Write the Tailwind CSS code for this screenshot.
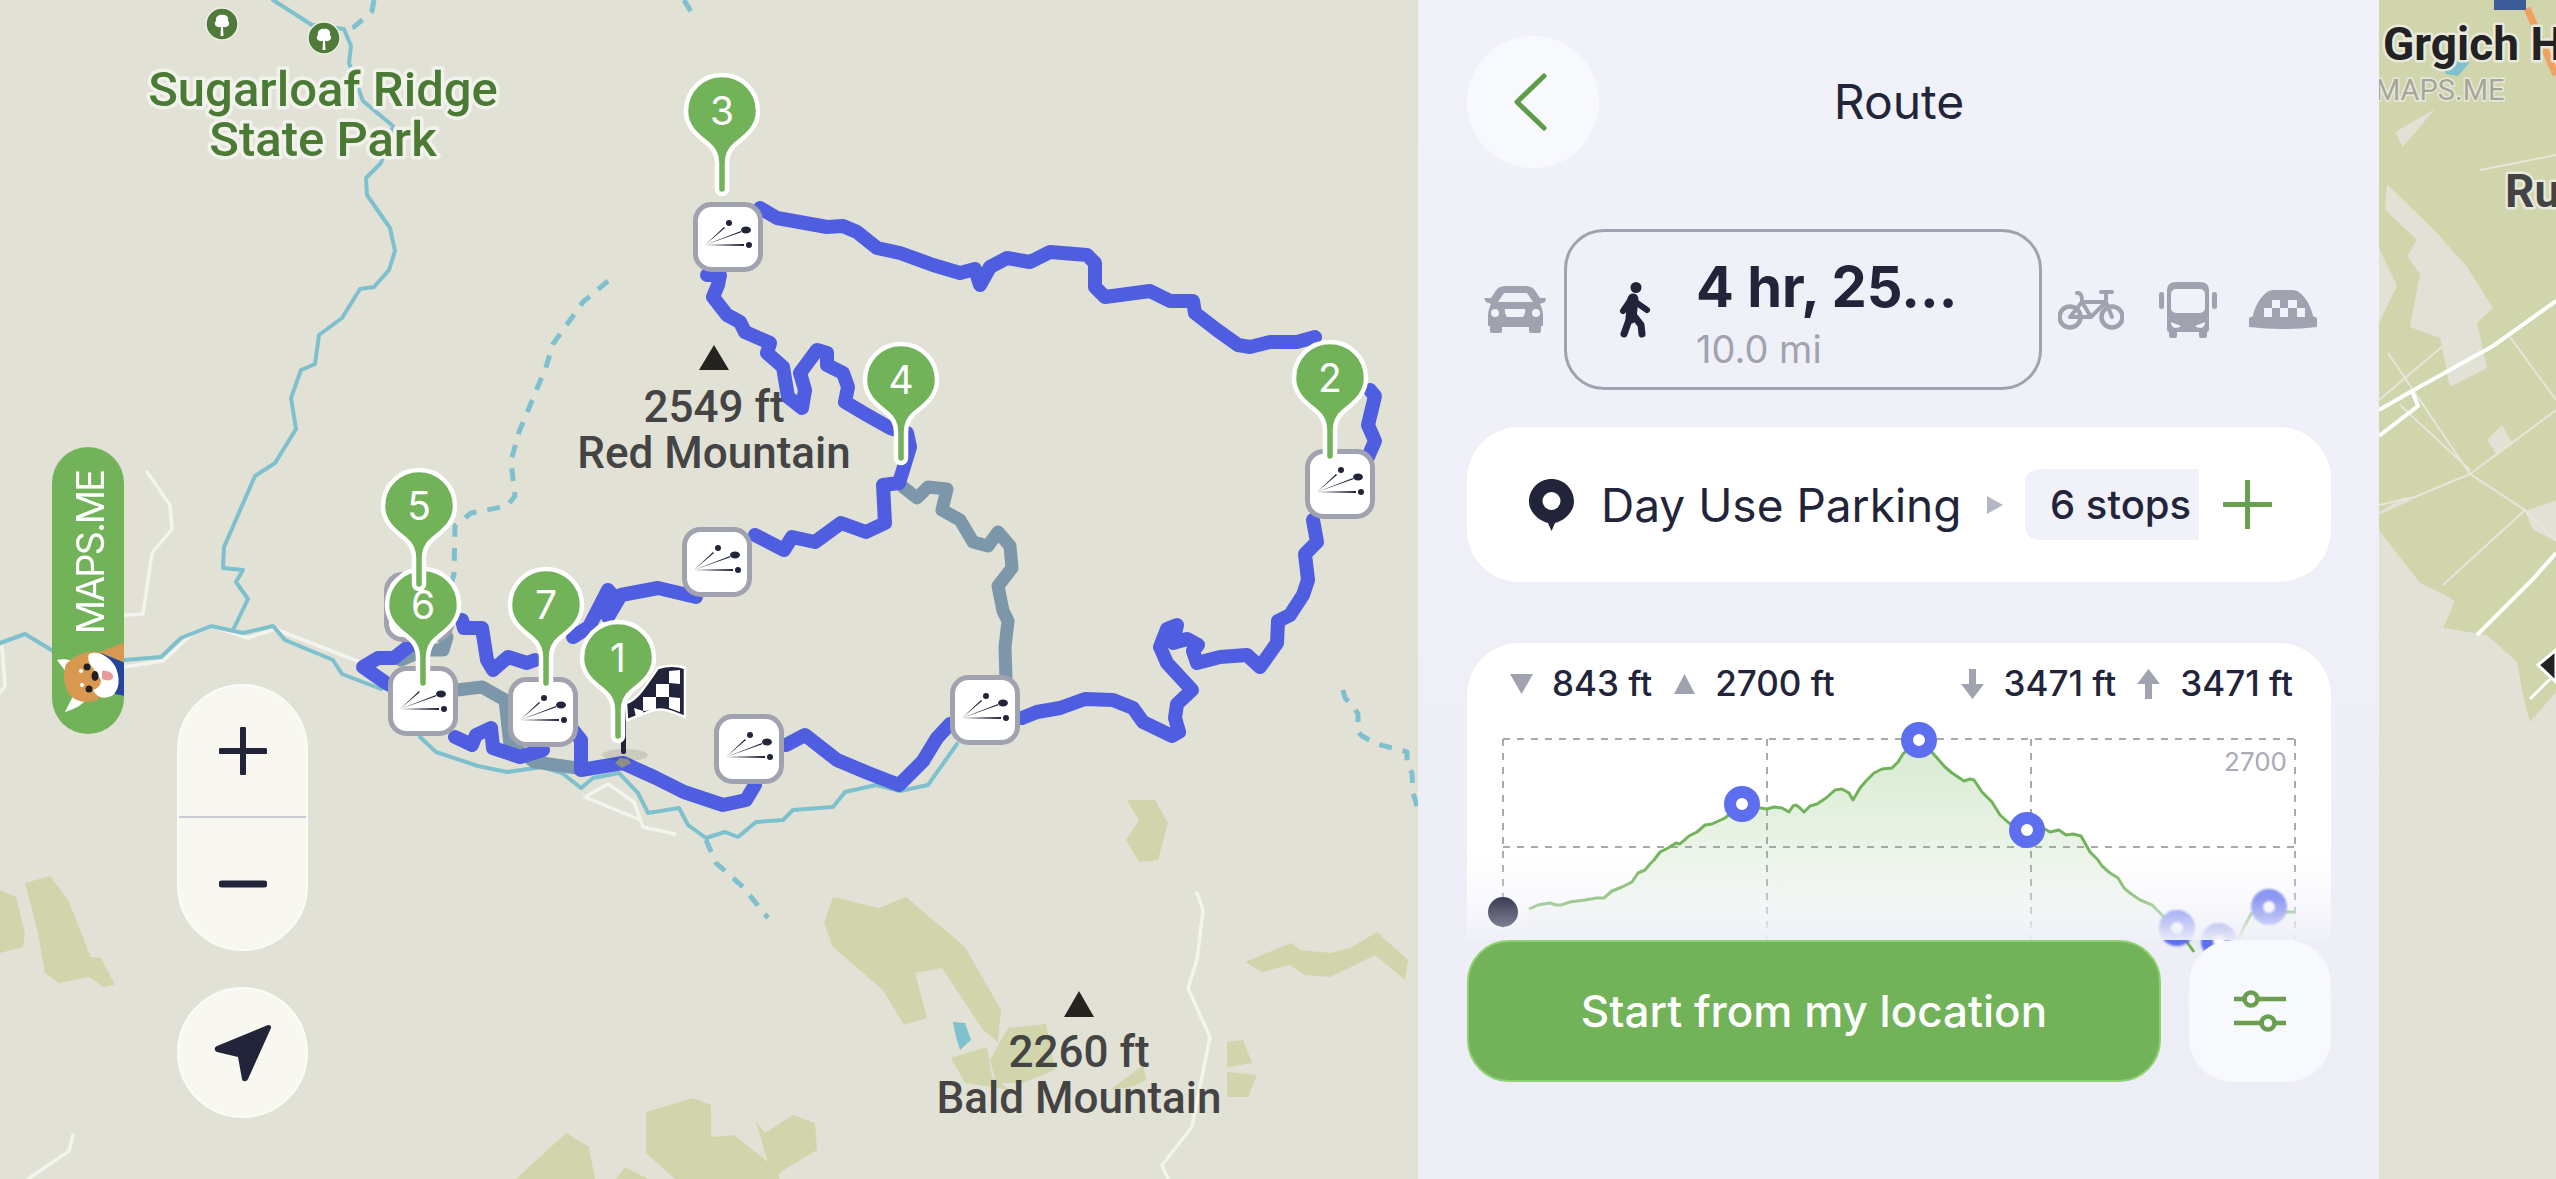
<!DOCTYPE html>
<html lang="en">

<head>
  <meta charset="utf-8" />
  <meta content="width=device-width, initial-scale=1.0" name="viewport" />
  <title>Route</title>
  <script src="https://cdn.jsdelivr.net/npm/@tailwindcss/browser@4"></script>
</head>

<body class="w-[2556px] h-[1179px] overflow-hidden flex font-['Inter',sans-serif] text-[#22243a]">

  <!-- Map, left part -->
  <div class="relative w-[1418px] h-full shrink-0 bg-[#e2e1d5] overflow-hidden">
    <svg class="absolute inset-0" width="1418" height="1179" viewBox="0 0 1418 1179" fill="none">
      <defs>
        <g id="pin">
          <path d="M0,-36 C20,-36 36,-20 36,0 C36,16 25,24 14,33 C8,38 5,44 5,52 L5,78 A5,5 0 0 1 -5,78 L-5,52 C-5,44 -8,38 -14,33 C-25,24 -36,16 -36,0 C-36,-20 -20,-36 0,-36Z" fill="#72b35a" stroke="#fff" stroke-width="4.5" />
        </g>
        <g id="stop">
          <rect x="-32.5" y="-32.5" width="65" height="65" rx="16" fill="#fff" stroke="#a0a2b0" stroke-width="5" />
          <path d="M-23,8 L-4,-10 L-3,-9Z M-23,8 L13,-6 L13.3,-4.8Z M-23,8 L16,7 L16,9Z" fill="#22243a" />
          <circle cx="1" cy="-14" r="3" fill="#22243a" />
          <ellipse cx="18" cy="-7" rx="5" ry="3.5" fill="#22243a" />
          <circle cx="21" cy="8" r="3" fill="#22243a" />
        </g>
        <g id="tree">
          <circle r="16" fill="#4f7a3a" stroke="#eeeee4" stroke-width="1.5" />
          <path d="M-1.5,12 L-1,3 C-6,4 -9,0 -6,-3 C-7,-8 -2,-10 0,-9 C3,-10 7,-8 6,-3 C9,0 6,4 1,3 L1.5,12Z" fill="#fff" />
        </g>
      </defs>

      <!-- forest -->
      <g fill="#d0d5ac">
        <polygon points="833,897 879,908 906,897 965,947 1001,1010 998,1042 983,1030 942,968 915,973 927,1018 904,1025 883,990 833,947 824,923" />
        <polygon points="1008,1028 1046,1024 1055,1070 1023,1083 996,1083 990,1060" />
        <polygon points="951,1058 987,1047 992,1077 1010,1090 965,1083" />
        <polygon points="1110,1090 1143,1065 1146,1080 1132,1087" />
        <polygon points="1227,1042 1243,1040 1252,1063 1227,1067" />
        <polygon points="1227,1072 1257,1075 1248,1097 1227,1097" />
        <polygon points="1245,962 1262,972 1290,965 1305,975 1330,977 1345,970 1375,955 1405,980 1408,960 1377,932 1350,948 1331,953 1300,950 1291,943" />
        <polygon points="1127,800 1155,800 1168,823 1158,860 1139,862 1126,840 1139,820" />
        <polygon points="25,883 50,876 68,900 91,957 101,958 115,985 104,987 89,977 59,983 45,973 38,933" />
        <polygon points="0,890 16,897 25,933 23,947 0,953" />
        <polygon points="646,1112 693,1098 711,1105 711,1137 734,1135 768,1162 756,1122 765,1133 793,1115 815,1123 817,1150 779,1173 779,1179 675,1179 646,1153" />
        <polygon points="516,1179 566,1133 589,1147 595,1179" />
        <polygon points="616,1179 625,1167 648,1179" />
      </g>
      <polygon points="953,1022 965,1023 971,1040 960,1050 956,1037" fill="#7fc0ce" />

      <!-- roads -->
      <g stroke="#f4f4ee" stroke-width="3.5" stroke-linejoin="round" stroke-linecap="round">
        <polyline points="147,472 170,505 172,529 152,553 143,614 124,615" />
        <polyline points="124,667 163,661 193,633 211,626 248,638 275,629 360,662" />
        <polyline points="2,647 5,686 0,693" />
        <polyline points="73,1135 69,1151 28,1179" />
        <polyline points="1197,893 1203,910 1197,960 1188,988 1210,1037 1192,1127 1162,1165 1168,1179" />
        <polyline points="585,797 608,784 634,802 643,827 675,834" />
        <polyline points="585,797 638,819" />
      </g>

      <!-- streams -->
      <g stroke="#7fc0ce" stroke-width="4" stroke-linejoin="round" stroke-linecap="round">
        <polyline points="273,0 312,25 344,29 351,46 349,63 363,101 393,126 381,163 366,178 367,195 390,228 395,251 389,270 374,287 360,289 342,318 319,335 315,364 301,370 291,398 296,429 275,463 255,476 224,547 223,568 243,570 236,582 248,599 234,628" />
        <polyline points="0,643 25,634 53,651" />
        <polyline points="124,660 161,657 181,638 211,626 243,633 273,626 285,640 333,660 342,674 381,689" />
        <polyline points="420,737 436,752 478,766 507,772 542,767 562,773 581,788 593,778 619,773 638,793 648,813 679,808 688,825 706,838 725,832 738,837 756,822 783,820 793,810 833,807 845,792 876,785 900,791 928,785 957,744" />
      </g>
      <g stroke="#7fc0ce" stroke-width="5" stroke-linejoin="round" stroke-dasharray="13 11">
        <polyline points="608,281 583,302 553,344 546,367 519,432 511,461 515,496 507,506 471,513 455,526 454,574 450,589" />
        <polyline points="374,0 372,11 354,27 344,29" />
        <polyline points="684,0 693,15" />
        <polyline points="1343,690 1345,698 1353,706 1358,714 1358,732 1362,736 1377,744 1400,750 1407,752 1407,765 1412,773 1413,793 1418,809" />
        <polyline points="706,840 716,863 743,887 768,918" />
      </g>

      <!-- peaks and park labels -->
      <polygon points="699,370 714,345 729,370" fill="#24231f" />
      <polygon points="1064,1017 1079,991 1094,1017" fill="#24231f" />
      <g font-family="Roboto, sans-serif" font-weight="500" font-size="44" fill="#444444" text-anchor="middle">
        <text x="714" y="422">2549 ft</text>
        <text x="714" y="468">Red Mountain</text>
        <text x="1079" y="1067">2260 ft</text>
        <text x="1079" y="1113">Bald Mountain</text>
      </g>
      <g font-family="Roboto, sans-serif" font-weight="500" font-size="49" fill="#4b7a35" stroke="#f2f2ec" stroke-width="7" stroke-linejoin="round" paint-order="stroke" text-anchor="middle">
        <text x="323" y="106">Sugarloaf Ridge</text>
        <text x="323" y="156">State Park</text>
      </g>
      <use href="#tree" x="222" y="24" />
      <use href="#tree" x="324" y="38" />

      <!-- route -->
      <g stroke="#7d97aa" stroke-width="13" stroke-linejoin="round" stroke-linecap="round">
        <polyline points="903,487 917,498 928,487 947,489 942,510 960,520 973,542 988,546 998,532 1010,546 1012,568 998,586 1003,611 1008,621 1005,647 1006,680" />
        <polyline points="401,660 425,650 443,650 447,637" />
        <polyline points="440,690 457,690 482,687 505,700 510,745 535,762 577,768" />
      </g>
      <g stroke="#4f5ee0" stroke-width="14" stroke-linejoin="round" stroke-linecap="round">
        <polyline points="760,208 777,218 827,227 843,226 857,232 877,248 900,253 933,265 960,273 975,269 980,285 990,267 1007,258 1030,262 1050,252 1087,255 1095,263 1095,287 1105,297 1150,291 1170,301 1193,301 1195,313 1217,330 1238,345 1250,347 1270,342 1297,342 1315,337" />
        <polyline points="1370,390 1375,396 1368,425 1375,441 1368,457" />
        <polyline points="1313,520 1317,542 1305,554 1308,580 1303,595 1290,615 1278,621 1277,643 1260,667 1247,655 1220,657 1197,663 1193,651 1198,645 1187,639 1173,643 1177,625 1167,629 1160,647 1167,663 1192,690 1177,704 1175,718 1179,732 1172,736 1143,722 1133,708 1113,700 1085,699 1060,708 1037,712 1022,718" />
        <polyline points="950,724 937,738 923,761 899,785 868,773 837,760 805,735 786,745" />
        <polyline points="755,785 746,800 723,805 684,792 654,777 623,763 581,770 581,740 573,730" />
        <polyline points="543,750 520,757 493,748 491,728 476,735 472,745 455,737" />
        <polyline points="400,690 386,683 363,667 378,658 394,658 413,643" />
        <polyline points="462,620 464,628 482,628 487,660 493,670 508,657 527,663 535,660" />
        <polyline points="573,637 589,627 608,590 614,597 608,617 621,595 658,588 696,597" />
        <polyline points="755,535 784,550 792,537 815,542 841,523 866,532 885,523 883,485 899,483" />
        <polyline points="707,275 720,275 718,285 713,297 727,315 740,322 745,332 770,343 767,353 783,367 788,397 802,408 805,390 800,373 817,350 827,353 827,365 843,373 848,387 845,402 867,415 890,428 907,433 910,447 903,470 899,483" />
      </g>

      <!-- stops -->
      <use href="#stop" x="419" y="607" />
      <use href="#stop" x="423" y="701" />
      <use href="#stop" x="543" y="712" />
      <use href="#stop" x="717" y="562" />
      <use href="#stop" x="749" y="749" />
      <use href="#stop" x="985" y="710" />
      <use href="#stop" x="1340" y="484" />
      <use href="#stop" x="728" y="237" />

      <!-- finish flag -->
      <ellipse cx="625" cy="755" rx="23" ry="6" fill="#000" fill-opacity="0.1" />
      <path d="M615,763 L620,758 L628,759 L631,763 L622,768Z" fill="#8e8e88" />
      <rect x="621" y="700" width="5" height="54" rx="2" fill="#22243a" />
      <path d="M626,703 C638,700 647,683 658,668 C668,665 676,665 685,668 L685,717 C675,713 665,708 655,710 C645,712 635,718 627,720Z" fill="#22243a" stroke="#fff" stroke-width="2.5" stroke-linejoin="round" />
      <g fill="#fff">
        <polygon points="669,671 680,670 680,684 669,683" />
        <polygon points="656,684 669,684 669,697 656,697" />
        <polygon points="669,697 680,698 680,712 669,708" />
        <polygon points="643,697 656,697 656,710 643,711" />
        <polygon points="634,708 643,711 643,714 636,717" />
      </g>

      <!-- numbered pins -->
      <g font-family="Inter, sans-serif" font-size="39" fill="#fff" text-anchor="middle">
        <use href="#pin" x="423" y="605" /><text x="423" y="619">6</text>
        <use href="#pin" x="419" y="506" /><text x="419" y="520">5</text>
        <use href="#pin" x="546" y="605" /><text x="546" y="619">7</text>
        <use href="#pin" x="618" y="658" /><text x="618" y="672">1</text>
        <use href="#pin" x="1330" y="378" /><text x="1330" y="392">2</text>
        <use href="#pin" x="722" y="111" /><text x="722" y="125">3</text>
        <use href="#pin" x="901" y="380" /><text x="901" y="394">4</text>
      </g>
    </svg>

    <!-- MAPS.ME tag -->
    <div class="absolute left-[52px] top-[447px] w-[72px] h-[287px] rounded-full bg-[#72b35a] overflow-hidden flex flex-col items-center pt-[24px] pl-[4px]">
      <span class="[writing-mode:vertical-rl] rotate-180 text-white text-[38px] tracking-[-2px] leading-none">MAPS.ME</span>
      <svg class="absolute left-[-7px] top-[183px]" width="90" height="90" viewBox="0 0 90 90">
        <path d="M50,24 L80,12 V32Z" fill="#d9984f" />
        <path d="M56,23 L80,33 V66 L70,64Z" fill="#27459a" />
        <path d="M12,30 C18,28 28,30 33,34 L24,46Z" fill="#fff" />
        <path d="M20,82 C26,80 36,76 40,71 L28,66Z" fill="#fff" />
        <path d="M21,34 C28,27 40,20 52,22 C62,36 62,62 52,70 C42,74 30,72 24,64 C18,54 18,44 21,34Z" fill="#d9984f" />
        <path d="M44,24 C52,20 64,26 70,36 C76,48 74,60 68,65 C60,70 52,68 48,60 C54,58 56,54 56,50 C54,46 50,42 48,38 C44,34 42,28 44,24Z" fill="#fff" />
        <circle cx="42" cy="37" r="3.5" fill="#1f1f24" />
        <circle cx="44" cy="59" r="3.5" fill="#1f1f24" />
        <ellipse cx="50" cy="46" rx="3.5" ry="5" fill="#1f1f24" />
        <path d="M57,41 C64,40 69,44 68,48 C65,52 60,50 57,49Z" fill="#e79a9a" />
        <circle cx="36" cy="41" r="2" fill="#fff" />
        <circle cx="37" cy="55" r="2" fill="#fff" />
      </svg>
    </div>

    <!-- zoom and location controls -->
    <div class="absolute left-[177px] top-[684px] w-[131px] flex flex-col gap-[36px]">
      <div class="h-[267px] rounded-full bg-[#f8f8f1] border-2 border-[#fbfbf7] flex flex-col">
        <div class="h-[132px] flex items-center justify-center border-b-2 border-[#c9c9d4]">
          <svg width="48" height="48" viewBox="0 0 48 48"><path d="M24 2V46M2 24H46" stroke="#22243a" stroke-width="6" stroke-linecap="round" /></svg>
        </div>
        <div class="flex-1 flex items-center justify-center">
          <svg width="48" height="8" viewBox="0 0 48 8"><path d="M3 4H45" stroke="#22243a" stroke-width="7" stroke-linecap="round" /></svg>
        </div>
      </div>
      <div class="h-[131px] rounded-full bg-[#f8f8f1] border-2 border-[#fbfbf7] flex items-center justify-center">
        <svg width="58" height="58" viewBox="0 0 58 58"><path d="M54,1 C56,0.5 57.5,2 57,4 L34,55 C32.5,58 28.5,58 28,55 L24,33 L3,28 C0,27 0,23 3,22Z" fill="#22243a" /></svg>
      </div>
    </div>
  </div>

  <!-- Route panel -->
  <div class="relative z-10 w-[961px] h-full shrink-0 bg-linear-to-b from-[#f0f1f9] to-[#ecedf5] pl-[49px] pr-[48px] pt-[36px]">
    <div class="relative h-[132px] flex items-center justify-center">
      <div class="absolute left-0 top-0 w-[132px] h-[132px] rounded-full bg-[#f8f9fd] flex items-center justify-center">
        <svg class="mr-[6px]" width="36" height="58" viewBox="0 0 36 58"><path d="M32 3L5 29L32 55" fill="none" stroke="#5f9c4a" stroke-width="5" stroke-linecap="round" stroke-linejoin="round" /></svg>
      </div>
      <h1 class="text-[48px] leading-none">Route</h1>
    </div>

    <!-- transport modes -->
    <div class="mt-[61px] h-[161px] flex items-center pl-[17px]">
      <svg class="shrink-0" width="63" height="48" viewBox="0 0 63 48">
        <path d="M11,6 C13,2 17,0 22,0 H41 C46,0 50,2 52,6 L56,12 H62 L61,16 L56,18 C58,22 59,26 59,30 V40 H57 V45 Q57,47 55,47 H47 Q45,47 45,45 V41 H18 V45 Q18,47 16,47 H8 Q6,47 6,45 V40 H4 V30 C4,26 5,22 7,18 L2,16 L0,12 H7Z" fill="#a0a2b0" />
        <path d="M14,16 H49 L43,7 H20Z M21,23 H41 Q42,27 39,31 H23 Q20,27 21,23Z" fill="#f0f1f9" />
        <circle cx="11" cy="27" r="4" fill="#f0f1f9" />
        <circle cx="52" cy="27" r="4" fill="#f0f1f9" />
      </svg>
      <div class="ml-[17px] w-[478px] h-[161px] shrink-0 rounded-[40px] border-[3px] border-[#a0a2b0] flex items-start pl-[52px] pt-[24px]">
        <svg class="shrink-0 mt-[26px]" width="32" height="56" viewBox="0 0 32 56" fill="none" stroke="#22243a" stroke-linecap="round" stroke-linejoin="round">
          <circle cx="17" cy="5.5" r="5.5" fill="#22243a" stroke="none" />
          <path d="M14,17 L12,36" stroke-width="11" />
          <path d="M12,17 L4,29 M18,21 L28,28" stroke-width="6" />
          <path d="M10,38 L5,52 M15,34 L22,43 L23,52" stroke-width="7" />
        </svg>
        <div class="ml-[45px] flex flex-col">
          <div class="h-[62px] text-[56px] leading-[62px] font-bold whitespace-nowrap">4 hr, 25...</div>
          <div class="h-[50px] mt-[6px] text-[38px] leading-[50px] text-[#a0a2b0]">10.0 mi</div>
        </div>
      </div>
      <svg class="ml-[16px] shrink-0" width="66" height="40" viewBox="0 0 66 40" fill="none" stroke="#a0a2b0" stroke-width="4" stroke-linecap="round" stroke-linejoin="round">
        <circle cx="12" cy="27" r="10.5" stroke-width="4.5" />
        <circle cx="54" cy="27" r="10.5" stroke-width="4.5" />
        <path d="M12,27 H33 L48,12 H24 L12,27 M19,3 C24,2 24,9 24,12 L33,27 M43,2 H54 M48,2 V12 L54,27" />
      </svg>
      <svg class="ml-[35px] shrink-0" width="58" height="56" viewBox="0 0 58 56">
        <path d="M17,0 H41 C47,0 50,3 50,9 V48 Q50,50 48,50 V54 Q48,56 46,56 H42 Q40,56 40,54 V50 H18 V54 Q18,56 16,56 H12 Q10,56 10,54 V50 Q8,50 8,48 V9 C8,3 11,0 17,0Z" fill="#a0a2b0" />
        <rect x="12" y="7" width="34" height="24" rx="5" fill="#f0f1f9" />
        <path d="M12,40 L22,44 Q20,46 16,46 Q12,45 12,40Z M46,40 L36,44 Q38,46 42,46 Q46,45 46,40Z" fill="#f0f1f9" />
        <rect x="0" y="10" width="5" height="17" rx="2.5" fill="#a0a2b0" />
        <rect x="53" y="10" width="5" height="17" rx="2.5" fill="#a0a2b0" />
      </svg>
      <svg class="ml-[32px] shrink-0" width="68" height="39" viewBox="0 0 68 39">
        <path d="M4,26 C6,14 16,0 24,0 H44 C52,0 62,14 64,26 L68,28 V37 Q34,41 0,37 V28Z" fill="#a0a2b0" />
        <path d="M23,10 H31 V18 H23Z M39,10 H48 V18 H39Z M15,18 H23 V27 H15Z M31,18 H39 V27 H31Z M48,18 H56 V27 H48Z" fill="#f0f1f9" />
      </svg>
    </div>

    <!-- start point and stops -->
    <div class="mt-[37px] h-[155px] rounded-[52px] bg-white flex items-center pl-[62px]">
      <svg class="shrink-0" width="45" height="52" viewBox="0 0 45 52">
        <path d="M22.5,0 C35,0 45,10 45,22.5 C45,34 34,42 26,44 L22.5,52 L19,44 C11,42 0,34 0,22.5 C0,10 10,0 22.5,0Z" fill="#22243a" />
        <circle cx="22.5" cy="22" r="9" fill="#fff" />
      </svg>
      <span class="ml-[27px] w-[362px] shrink-0 text-[46px] leading-none whitespace-nowrap">Day Use Parking</span>
      <svg class="ml-[24px] shrink-0" width="16" height="18" viewBox="0 0 16 18"><path d="M0 0L16 9L0 18Z" fill="#b4b6c2" /></svg>
      <div class="ml-[22px] w-[174px] h-[71px] shrink-0 rounded-l-[14px] bg-[#f0f1f9] flex items-center pl-[25px] text-[40px] font-medium leading-none whitespace-nowrap">6 stops</div>
      <svg class="ml-[24px] shrink-0" width="49" height="49" viewBox="0 0 49 49"><path d="M24.5 1V48M1 24.5H48" stroke="#6a9e50" stroke-width="5" stroke-linecap="round" /></svg>
    </div>

    <!-- elevation profile -->
    <div class="mt-[61px] h-[297px] rounded-t-[52px] bg-white">
      <div class="h-[57px] pt-[24px] pl-[43px] pr-[38px] flex items-center justify-between text-[35px] font-medium leading-none">
        <div class="flex items-center">
          <svg width="23" height="20" viewBox="0 0 23 20"><path d="M0 0H23L11.5 20Z" fill="#a0a2b0" /></svg>
          <span class="ml-[19px]">843 ft</span>
          <svg class="ml-[22px]" width="21" height="20" viewBox="0 0 21 20"><path d="M10.5 0L21 20H0Z" fill="#a0a2b0" /></svg>
          <span class="ml-[20px]">2700 ft</span>
        </div>
        <div class="flex items-center">
          <svg width="23" height="30" viewBox="0 0 23 30"><path d="M8 0H15V15H23L11.5 30L0 15H8Z" fill="#a0a2b0" /></svg>
          <span class="ml-[20px]">3471 ft</span>
          <svg class="ml-[21px]" width="23" height="30" viewBox="0 0 23 30"><path d="M8 30H15V15H23L11.5 0L0 15H8Z" fill="#a0a2b0" /></svg>
          <span class="ml-[20px]">3471 ft</span>
        </div>
      </div>
      <svg class="block overflow-visible" width="864" height="240" viewBox="1467 700 864 240" fill="none">
        <defs>
          <linearGradient id="area" x1="0" y1="0" x2="0" y2="1">
            <stop offset="0" stop-color="#72b35a" stop-opacity="0.28" />
            <stop offset="1" stop-color="#72b35a" stop-opacity="0.02" />
          </linearGradient>
          <linearGradient id="fade" x1="0" y1="0" x2="0" y2="1">
            <stop offset="0" stop-color="#eff0f8" stop-opacity="0" />
            <stop offset="0.55" stop-color="#eff0f8" stop-opacity="0.35" />
            <stop offset="1" stop-color="#eff0f8" stop-opacity="0.95" />
          </linearGradient>
          <linearGradient id="startdot" x1="0" y1="0" x2="0" y2="1">
            <stop offset="0" stop-color="#3b3d55" />
            <stop offset="1" stop-color="#7d7f92" />
          </linearGradient>
        </defs>
        <g stroke="#a9a9ad" stroke-width="2" stroke-dasharray="7 7">
          <path d="M1503 739H2295M1503 847H2295M1503 739V940M1767 739V940M2031 739V940M2295 739V940" />
        </g>
        <rect x="2220" y="741" width="74" height="38" fill="#fff" />
        <text x="2287" y="771" text-anchor="end" font-family="Inter, sans-serif" font-size="26" fill="#a9aab6">2700</text>
        <path d="M1529,909 L1538,905 1544,904 1550,903 1556,905 1561,905 1570,902 1585,900 1597,898 1604,898 1612,891 1622,887 1632,882 1638,873 1645,870 1650,864 1654,860 1660,852 1668,848 1676,843 1680,844 1689,836 1697,832 1705,825 1712,824 1725,818 1742,804 1754,807 1767,809 1774,807 1782,808 1789,812 1793,806 1796,805 1800,808 1804,812 1810,806 1817,804 1826,798 1835,790 1842,789 1849,793 1853,800 1860,788 1866,781 1874,773 1882,769 1892,768 1898,762 1903,754 1912,745 1919,740 1928,748 1938,759 1945,767 1952,773 1958,777 1964,781 1970,779 1974,780 1982,792 1992,802 2000,815 2009,823 2027,830 2043,828 2050,832 2059,830 2066,835 2073,834 2081,836 2090,852 2098,860 2102,866 2110,873 2118,878 2124,888 2130,893 2140,900 2152,905 2165,918 2177,928 2194,952 L2219,941 2236,945 2244,927 2251,914 2269,907 2285,912 2294,912 V940 H1529Z" fill="url(#area)" stroke="none" />
        <path d="M1529,909 L1538,905 1544,904 1550,903 1556,905 1561,905 1570,902 1585,900 1597,898 1604,898 1612,891 1622,887 1632,882 1638,873 1645,870 1650,864 1654,860 1660,852 1668,848 1676,843 1680,844 1689,836 1697,832 1705,825 1712,824 1725,818 1742,804 1754,807 1767,809 1774,807 1782,808 1789,812 1793,806 1796,805 1800,808 1804,812 1810,806 1817,804 1826,798 1835,790 1842,789 1849,793 1853,800 1860,788 1866,781 1874,773 1882,769 1892,768 1898,762 1903,754 1912,745 1919,740 1928,748 1938,759 1945,767 1952,773 1958,777 1964,781 1970,779 1974,780 1982,792 1992,802 2000,815 2009,823 2027,830 2043,828 2050,832 2059,830 2066,835 2073,834 2081,836 2090,852 2098,860 2102,866 2110,873 2118,878 2124,888 2130,893 2140,900 2152,905 2165,918 2177,928 2194,952 M2236,945 L2244,927 2251,914 2269,907 2285,912 2294,912" stroke="#72b35a" stroke-width="3" stroke-linejoin="round" />
        <g stroke="#5d6eef" stroke-width="12" fill="#fff">
          <circle cx="1742" cy="804" r="12" />
          <circle cx="1919" cy="740" r="12" />
          <circle cx="2027" cy="830" r="12" />
          <circle class="blur-[1px]" cx="2177" cy="928" r="12" />
          <circle class="blur-[1px]" cx="2219" cy="941" r="12" />
          <circle class="blur-[1px]" cx="2269" cy="907" r="12" />
        </g>
        <rect x="1467" y="850" width="864" height="90" fill="url(#fade)" />
        <circle cx="1503" cy="912" r="15" fill="url(#startdot)" />
      </svg>
    </div>

    <!-- actions -->
    <div class="relative flex gap-[28px]">
      <button class="w-[694px] h-[142px] rounded-[42px] bg-[#72b35a] border-2 border-[#8fd070] text-white text-[44px] font-medium leading-none">Start from my location</button>
      <button class="w-[142px] h-[142px] rounded-[44px] bg-[#f8f9fd] flex items-center justify-center">
        <svg width="52" height="42" viewBox="0 0 52 42" fill="none" stroke="#6a9e50" stroke-width="4.5">
          <path d="M0 9H11M24 9H52M0 33H28M41 33H52" stroke-linecap="round" />
          <circle cx="17" cy="9" r="6.5" />
          <circle cx="34" cy="33" r="6.5" />
        </svg>
      </button>
    </div>
  </div>

  <!-- Map, right part -->
  <div class="relative flex-1 h-full bg-[#d0d5ac] overflow-hidden">
    <svg class="absolute inset-0" width="177" height="1179" viewBox="2379 0 177 1179" fill="none">
      <g fill="#e2e1d5">
        <polygon points="2379,530 2420,583 2443,594 2455,601 2443,628 2487,635 2517,662 2523,695 2530,722 2556,692 2556,1179 2379,1179" />
        <polygon points="2387,184 2437,233 2467,267 2493,308 2477,323 2487,368 2450,387 2440,338 2410,327 2420,274 2407,256 2417,240 2385,210" />
        <polygon points="2379,248 2397,286 2379,323" />
        <polygon points="2395,132 2435,109 2403,147" />
        <polygon points="2487,440 2502,425 2513,444 2497,455" />
        <polygon points="2525,511 2556,500 2556,541 2533,530" />
        <polygon points="2379,512 2405,497 2412,500 2379,515" />
      </g>
      <g stroke="#e6e6da" stroke-width="2">
        <path d="M2388,353 L2470,474 M2379,505 L2415,497 L2470,474 L2525,510 L2556,541 M2470,474 L2556,410 M2510,337 L2556,400 M2450,340 L2379,400 M2400,405 L2470,470 M2443,585 L2525,510 M2480,170 L2556,155" />
      </g>
      <g stroke="#fff" stroke-linejoin="round">
        <polyline points="2379,410 2412,391 2493,346 2556,301" stroke-width="4" />
        <polyline points="2379,436 2418,406 2412,391" stroke-width="4" />
        <polyline points="2477,635 2533,579 2556,553" stroke-width="4" />
        <polyline points="2530,699 2556,673" stroke-width="3" />
      </g>
      <path d="M2527,8 L2556,75" stroke="#f0a060" stroke-width="7" />
      <rect x="2494" y="0" width="32" height="10" fill="#3d5a99" />
      <path d="M2439,60 L2470,62 L2458,76 L2446,74Z" fill="#7fc0ce" />
      <path d="M2538,665 L2556,650 V682Z" fill="#222" stroke="#fff" stroke-width="3" />
      <g font-family="Roboto, sans-serif" font-weight="700" font-size="46" fill="#222" stroke="#e8e8dc" stroke-width="5" stroke-linejoin="round" paint-order="stroke">
        <text x="2383" y="60">Grgich H</text>
        <text x="2505" y="207" fill="#444">Ru</text>
      </g>
      <text x="2375" y="100" font-family="Roboto, sans-serif" font-size="29" fill="#a6a698" stroke="#e8e8dc" stroke-width="3" paint-order="stroke">MAPS.ME</text>
    </svg>
  </div>
</body>

</html>
